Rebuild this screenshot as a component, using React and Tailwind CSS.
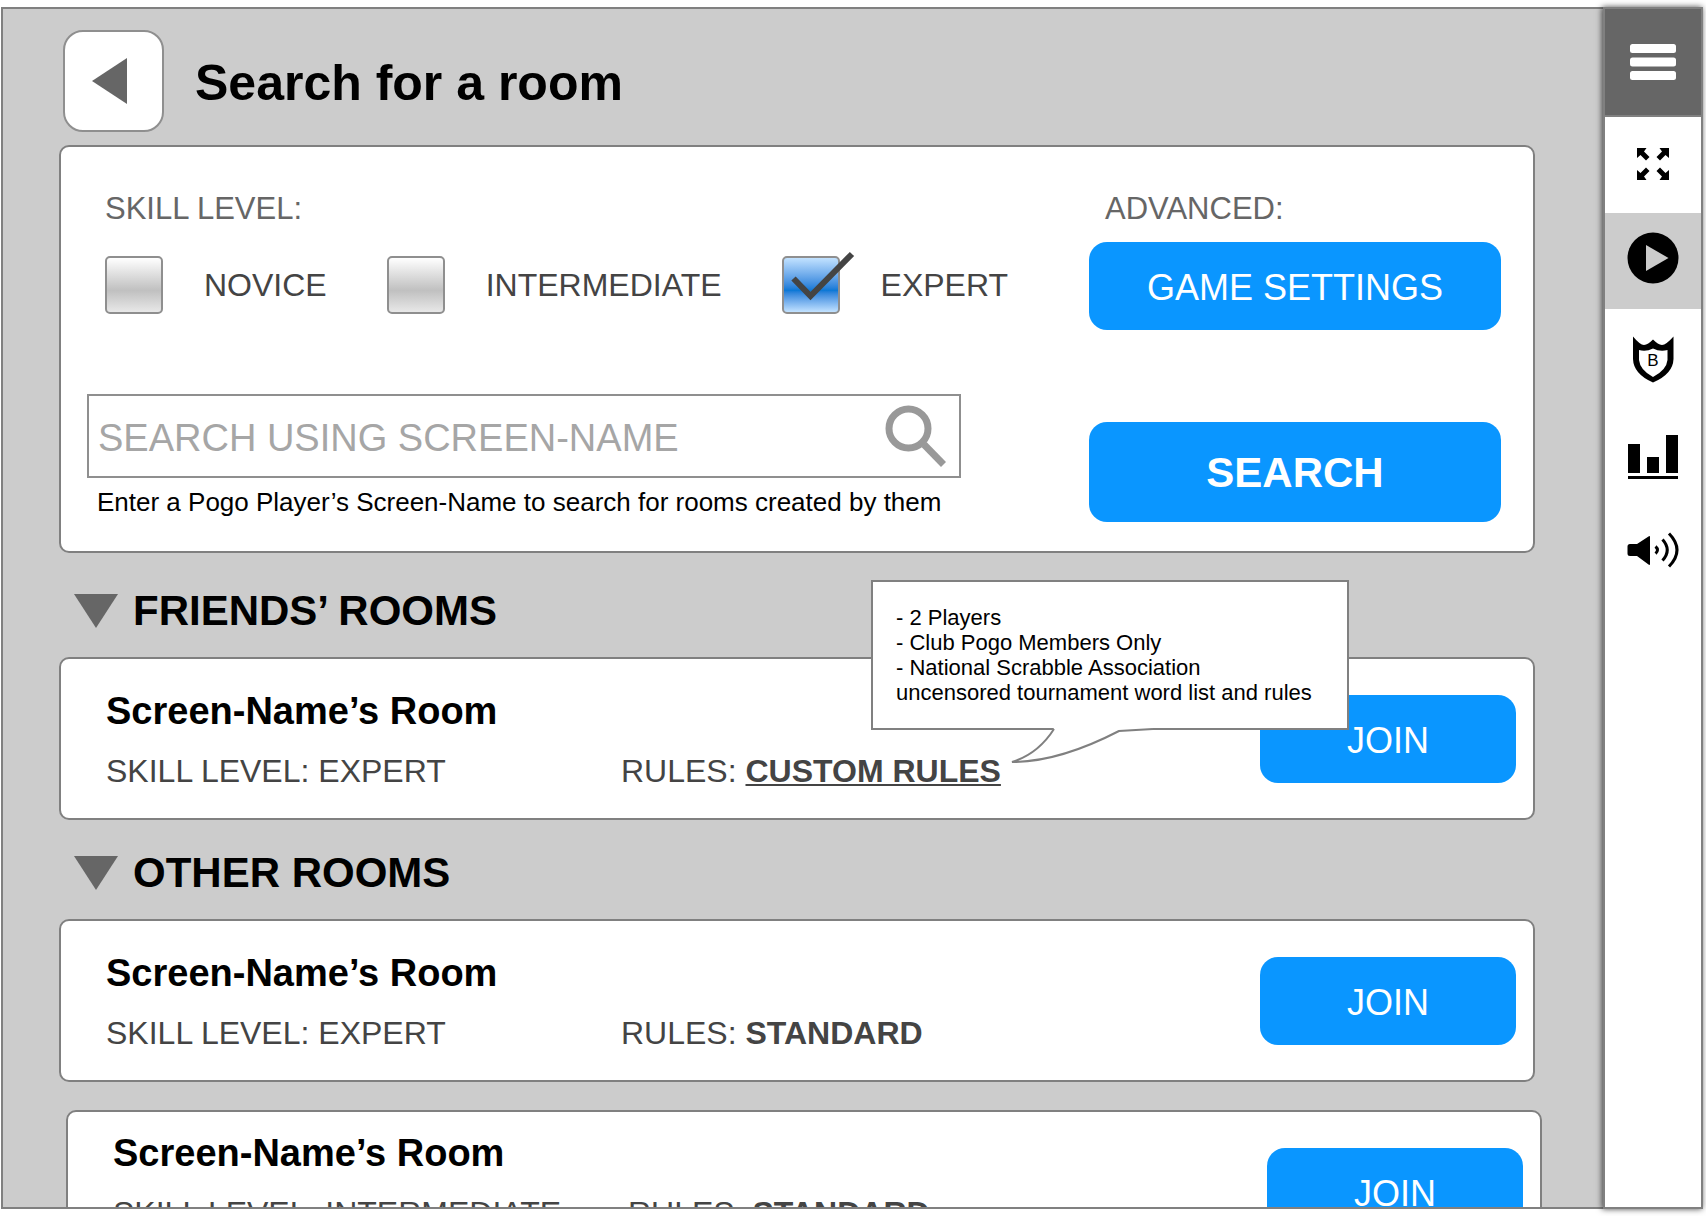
import React from "react";

const blueButton =
  "flex items-center justify-center rounded-[18px] bg-[#0a96ff] text-white";

function SkillOption({ id, label, checked = false }) {
  return (
    <div className="flex items-center gap-[41px]">
      <span className="relative block size-[58px] shrink-0">
        <input
          id={id}
          type="checkbox"
          defaultChecked={checked}
          className="peer block size-full appearance-none rounded-[5px] border-2 border-[#8f8f8f] bg-linear-to-b from-white via-[#c0c0c0] via-60% to-[#e8e8e8] checked:from-[#c2e2ff] checked:via-[#0a78d6] checked:to-[#c2e2ff]"
        />
        <svg
          viewBox="0 0 58 58"
          className="pointer-events-none absolute inset-0 hidden size-full overflow-visible peer-checked:block"
          fill="none"
          stroke="#444"
          strokeWidth="6"
          aria-hidden="true"
        >
          <path d="M11.500 22.500 28.500 40 70 -2" />
        </svg>
      </span>
      <label htmlFor={id} className="text-[32px] leading-10 text-[#444]">
        {label}
      </label>
    </div>
  );
}

function SectionHeading({ children }) {
  return (
    <h2 className="flex items-center gap-[15px] pl-[15px] text-[42px] leading-[48px] font-bold text-black">
      <svg viewBox="0 0 44 34" className="h-[34px] w-11" aria-hidden="true">
        <path d="M0 0H44L22 34Z" fill="#666" />
      </svg>
      {children}
    </h2>
  );
}

function RulesTooltip() {
  return (
    <div
      role="tooltip"
      className="absolute bottom-[61px] left-[250px] z-10 w-[478px] border-2 border-[#808080] bg-white px-[23px] py-[23px] text-[22px] leading-[25px] text-black"
    >
      <p>- 2 Players</p>
      <p>- Club Pogo Members Only</p>
      <p>
        - National Scrabble Association
        <br />
        <span className="whitespace-nowrap">uncensored tournament word list and rules</span>
      </p>
      <svg
        viewBox="0 0 146 38"
        className="absolute top-full left-[136px] h-[38px] w-[146px]"
        aria-hidden="true"
      >
        <path d="M45 0Q29 26 3 34Q50 34 110 3L144 1V0Z" fill="#fff" />
        <path
          d="M45 1Q29 26 3 34Q50 34 110 3L144 1"
          fill="none"
          stroke="#808080"
          strokeWidth="2"
        />
      </svg>
    </div>
  );
}

function RoomCard({ skill, rules, tooltip = false, spacing = "pt-8", className = "" }) {
  return (
    <article
      className={`flex min-h-[163px] items-center rounded-[10px] border-2 border-[#808080] bg-white pr-[17px] pl-[45px] ${className}`}
    >
      <div className={`flex-1 self-start ${spacing}`}>
        <h3 className="text-[38px] leading-10 font-bold text-black">Screen-Name’s Room</h3>
        <div className="mt-5 flex text-[32px] leading-10 text-[#444]">
          <p className="w-[515px] shrink-0">SKILL LEVEL: {skill}</p>
          <div className="relative whitespace-nowrap">
            RULES:{" "}
            {tooltip ? (
              <a href="#rules" className="font-bold underline decoration-2 underline-offset-2">
                {rules}
              </a>
            ) : (
              <strong>{rules}</strong>
            )}
            {tooltip && <RulesTooltip />}
          </div>
        </div>
      </div>
      <button type="button" className={`${blueButton} h-[88px] w-64 shrink-0 pt-1 text-[36px]`}>
        JOIN
      </button>
    </article>
  );
}

function SideButton({ label, className = "", children }) {
  return (
    <button type="button" aria-label={label} className={`block h-24 w-full shrink-0 ${className}`}>
      <svg viewBox="0 0 96 96" className="mx-auto block size-24" aria-hidden="true">
        {children}
      </svg>
    </button>
  );
}

function Sidebar() {
  return (
    <nav className="z-20 flex w-[100px] shrink-0 flex-col border-2 border-[#808080] bg-white shadow-[-1px_0_6px_rgba(0,0,0,0.7)]">
      <button
        type="button"
        aria-label="Menu"
        className="block h-[108px] shrink-0 border-b-2 border-[#808080] bg-[#666]"
      >
        <svg viewBox="0 0 96 106" className="mx-auto block h-[106px] w-24" fill="#fff" aria-hidden="true">
          <rect x="25" y="35" width="46" height="9" rx="2.500" />
          <rect x="25" y="48.500" width="46" height="9" rx="2.500" />
          <rect x="25" y="62" width="46" height="9" rx="2.500" />
        </svg>
      </button>
      <SideButton label="Full screen">
        <path d="M32 31H41.500L39 34.500 44.500 40 41 43.500 35.500 38 32 41Z" />
        <path d="M64 31H54.500L57 34.500 51.500 40 55 43.500 60.500 38 64 41Z" />
        <path d="M32 63H41.500L39 59.500 44.500 54 41 50.500 35.500 56 32 53Z" />
        <path d="M64 63H54.500L57 59.500 51.500 54 55 50.500 60.500 56 64 53Z" />
      </SideButton>
      <SideButton label="Play" className="bg-[#ccc]">
        <circle cx="48" cy="45" r="25.500" />
        <path d="M41 32 63.500 45 41 58Z" fill="#ccc" />
      </SideButton>
      <SideButton label="Badges">
        <path
          fillRule="evenodd"
          d="M28 27.500Q35 36 39 36Q43 35.500 48 30.500Q53 35.500 57 36Q61 36 68.500 27.500V50Q68 65 48 73.500Q28.500 65 28 50ZM34 41V51Q35 61 48 68Q61.500 61 62.500 51V41Q55 43 48 39.500Q41 43 34 41Z"
        />
        <text x="48" y="57" textAnchor="middle" fontSize="17">
          B
        </text>
      </SideButton>
      <SideButton label="Statistics">
        <path d="M23 39H35V68H23ZM42 52H54V68H42ZM61 30H73V68H61ZM23 71H73V74H23Z" />
      </SideButton>
      <SideButton label="Sound">
        <path d="M25 43H32L43.500 35.500Q45 34.500 45 36V63Q45 64.500 43.500 63.500L32 55H25Q22.500 55 22.500 52.500V45.500Q22.500 43 25 43Z" />
        <path
          d="M50.500 45.500Q54.500 49 50.500 52.500M57.500 38.500Q67 49 57.500 59.500M64 32.500Q80 49 64 65.500"
          fill="none"
          stroke="#000"
          strokeWidth="3"
        />
      </SideButton>
    </nav>
  );
}

export default function App() {
  return (
    <div className="flex h-screen bg-white pt-[7px] pr-[3px] pb-[7px] pl-px font-['Liberation_Sans',Arial,sans-serif]">
      <main className="min-w-0 flex-1 overflow-hidden border-2 border-r-0 border-[#808080] bg-[#ccc] pr-[68px] pl-14">
        <header className="flex items-center gap-[31px] pt-[21px] pl-1">
          <button
            type="button"
            aria-label="Back"
            className="flex h-[102px] w-[101px] shrink-0 items-center justify-center rounded-[20px] border-2 border-[#8f8f8f] bg-white pr-2"
          >
            <svg viewBox="0 0 35 46" className="h-[46px] w-[35px]" aria-hidden="true">
              <path d="M0 23 35 0V46Z" fill="#666" />
            </svg>
          </button>
          <h1 className="pt-1 text-[50px] leading-[56px] font-bold text-black">Search for a room</h1>
        </header>

        <form
          className="mt-[13px] flex gap-32 rounded-[10px] border-2 border-[#808080] bg-white pt-[42px] pr-8 pb-[29px] pl-[26px]"
          onSubmit={(e) => e.preventDefault()}
        >
          <div className="min-w-0 flex-1">
            <fieldset className="min-w-0 pl-[18px]">
              <legend className="text-[31px] leading-10 text-[#666]">SKILL LEVEL:</legend>
              <div className="mt-[27px] flex gap-[60px]">
                <SkillOption id="novice" label="NOVICE" />
                <SkillOption id="intermediate" label="INTERMEDIATE" />
                <SkillOption id="expert" label="EXPERT" checked />
              </div>
            </fieldset>
            <div className="mt-20 flex h-[84px] items-center border-2 border-[#8f8f8f] pr-3 pl-[9px]">
              <input
                type="text"
                aria-label="Screen-name"
                aria-describedby="search-hint"
                placeholder="SEARCH USING SCREEN-NAME"
                className="h-full min-w-0 flex-1 pt-1 text-[38px] text-[#444] outline-none placeholder:text-[#a6a6a6]"
              />
              <svg viewBox="0 0 62 62" className="size-[62px] shrink-0" fill="none" stroke="#999" strokeWidth="7" aria-hidden="true">
                <circle cx="23.500" cy="23.500" r="19.500" />
                <path d="M39 39.500 58.500 59.500" />
              </svg>
            </div>
            <p id="search-hint" className="mt-2 pl-[10px] text-[26px] leading-8 whitespace-nowrap text-black">
              Enter a Pogo Player’s Screen-Name to search for rooms created by them
            </p>
          </div>
          <div className="w-[412px] shrink-0">
            <p className="pl-4 text-[31px] leading-10 text-[#666]">ADVANCED:</p>
            <button type="button" className={`${blueButton} mt-[13px] h-[88px] w-full pt-1 text-[36px]`}>
              GAME SETTINGS
            </button>
            <button type="submit" className={`${blueButton} mt-[92px] h-[100px] w-full text-[42px] font-bold`}>
              SEARCH
            </button>
          </div>
        </form>

        <section className="pt-[34px]">
          <SectionHeading>FRIENDS’ ROOMS</SectionHeading>
          <RoomCard skill="EXPERT" rules="CUSTOM RULES" tooltip className="mt-[22px]" />
        </section>

        <section className="pt-[29px]">
          <SectionHeading>OTHER ROOMS</SectionHeading>
          <RoomCard skill="EXPERT" rules="STANDARD" className="mt-[22px]" />
          <RoomCard
            skill="INTERMEDIATE"
            rules="STANDARD"
            spacing="pt-[21px]"
            className="mt-7 -mr-[7px] ml-[7px]"
          />
        </section>
      </main>
      <Sidebar />
    </div>
  );
}
